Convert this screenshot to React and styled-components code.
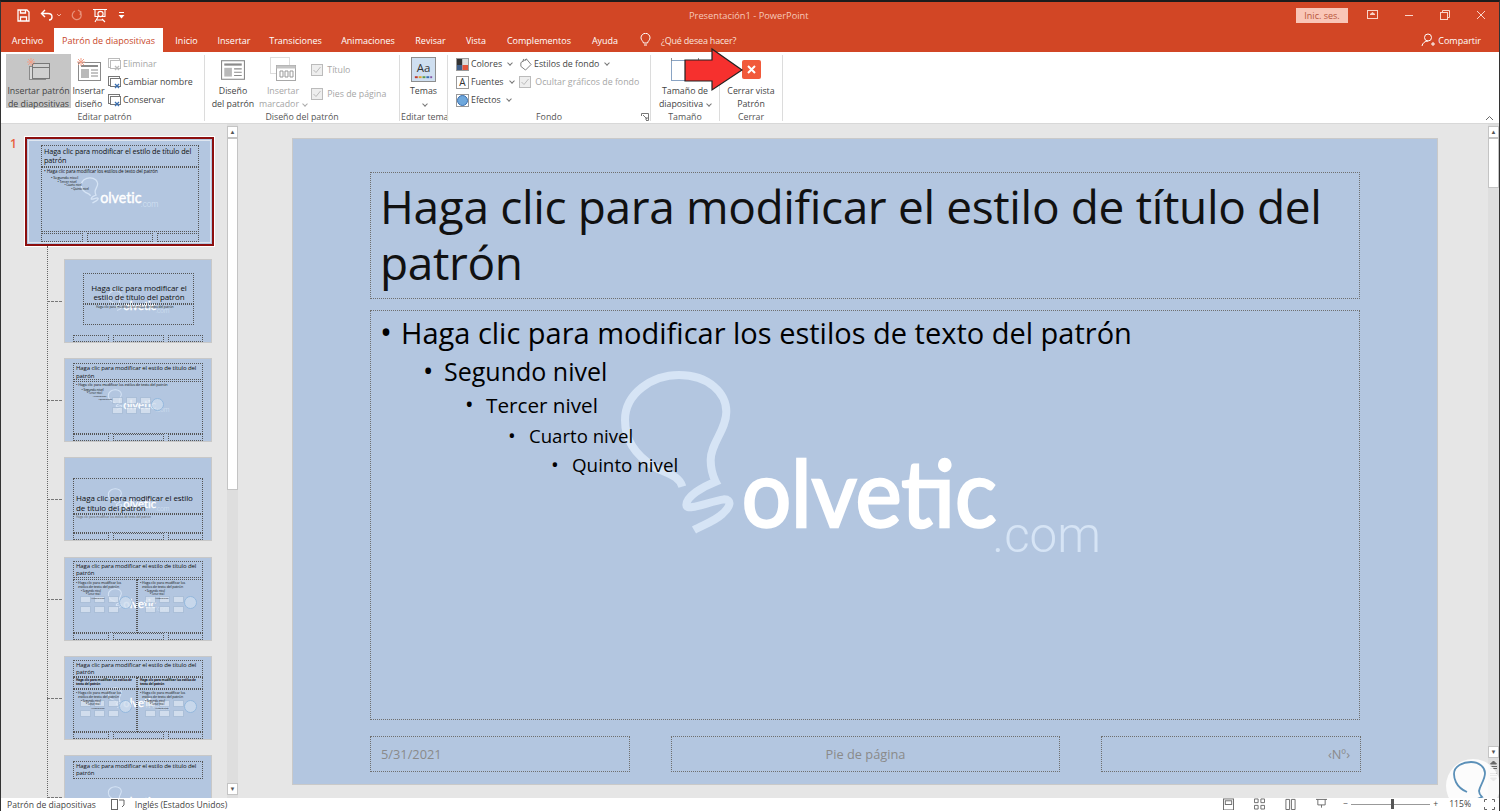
import React from 'react';
import styled, { createGlobalStyle } from 'styled-components';

const UI_FONT = '"Open Sans", "Noto Sans", sans-serif';

const Global = createGlobalStyle`
	html, body { margin: 0; padding: 0; height: 100%; overflow: hidden; background: #e6e6e6; }
	#root { height: 100%; }
	* { box-sizing: border-box; }
`;

const Win = styled.div`
	position: relative;
	width: 1500px;
	height: 811px;
	display: flex;
	flex-direction: column;
	overflow: hidden;
	border-top: 2px solid #1c1c1c;
	border-left: 1px solid #333;
	border-right: 1px solid #333;
	font-family: ${UI_FONT};
	background: #e6e6e6;
`;

/* title bar */
const TitleBar = styled.div`
	height: 26px;
	flex: none;
	background: #d24625;
	color: #fff;
	display: flex;
	align-items: center;
	position: relative;
`;
const Qat = styled.div`
	display: flex;
	align-items: center;
	gap: 10px;
	padding-left: 16px;
`;
const DocTitle = styled.div`
	position: absolute;
	left: 688px;
	top: 7px;
	font-size: 9.3px;
	color: #f6c9bb;
	white-space: nowrap;
`;
const WinControls = styled.div`
	margin-left: auto;
	display: flex;
	align-items: center;
	height: 100%;
`;
const SignIn = styled.div`
	width: 52px;
	height: 15px;
	background: #f9c6b7;
	color: #b8553b;
	font-size: 9px;
	line-height: 15px;
	text-align: center;
	margin-right: 7px;
`;
const WinBtn = styled.div`
	width: 36px;
	display: flex;
	justify-content: center;
`;

/* tabs */
const TabsRow = styled.div`
	height: 24px;
	flex: none;
	background: #d24625;
	display: flex;
	align-items: stretch;
	color: #fff;
	font-size: 9px;
`;
const Tab = styled.div`
	width: ${p => p.$w}px;
	flex: none;
	display: flex;
	align-items: center;
	justify-content: center;
	white-space: nowrap;
	background: ${p => (p.$active ? '#fff' : 'transparent')};
	color: ${p => (p.$active ? '#c8472a' : '#fff')};
`;
const TellMe = styled.div`
	display: flex;
	align-items: center;
	gap: 10px;
	margin-left: 14px;
	color: #fbe3db;
	letter-spacing: -0.2px;
`;
const Share = styled.div`
	margin-left: auto;
	display: flex;
	align-items: center;
	gap: 2px;
	padding-right: 18px;
`;

/* ribbon */
const Ribbon = styled.div`
	height: 72px;
	flex: none;
	background: #fff;
	display: flex;
	color: #444;
	font-size: 8.8px;
	border-bottom: 1px solid #d8d8d8;
	padding-left: 5px;
`;
const Group = styled.div`
	width: ${p => p.$w}px;
	flex: none;
	position: relative;
	display: flex;
	flex-direction: column;
	margin-right: 3px;
	&::after {
		content: '';
		position: absolute;
		right: -2px;
		top: 3px;
		bottom: 2px;
		width: 1px;
		background: #dcdcdc;
	}
`;
const GroupBody = styled.div`
	flex: 1;
	display: flex;
	align-items: flex-start;
	padding-top: 2px;
`;
const GroupLabel = styled.div`
	height: 12px;
	text-align: center;
	line-height: 12px;
	font-size: 8.8px;
	color: #555;
	position: relative;
	white-space: nowrap;
`;
const BigBtn = styled.div`
	width: ${p => p.$w}px;
	height: 54px;
	flex: none;
	display: flex;
	flex-direction: column;
	align-items: center;
	background: ${p => (p.$active ? '#c6c6c6' : 'transparent')};
	color: ${p => (p.$off ? '#a6a6a6' : '#444')};
`;
const BigIcon = styled.div`
	height: 31px;
	flex: none;
	display: flex;
	align-items: center;
	justify-content: center;
`;
const BigText = styled.div`
	line-height: 13px;
	text-align: center;
	white-space: nowrap;
`;
const SmallCol = styled.div`
	width: ${p => (p.$w ? `${p.$w}px` : 'auto')};
	flex: none;
	display: flex;
	flex-direction: column;
	gap: ${p => p.$gap ?? 0}px;
	padding-top: ${p => p.$top ?? 1}px;
	padding-left: ${p => p.$left ?? 0}px;
`;
const SmallBtn = styled.div`
	height: 18px;
	display: flex;
	align-items: center;
	gap: 2px;
	white-space: nowrap;
	color: ${p => (p.$off ? '#a6a6a6' : '#444')};
`;
const Chev = styled.span`
	display: inline-block;
	width: 4px;
	height: 4px;
	margin: 0 0 2px 4px;
	vertical-align: middle;
	border-right: 1px solid ${p => (p.$off ? '#aaa' : '#777')};
	border-bottom: 1px solid ${p => (p.$off ? '#aaa' : '#777')};
	transform: rotate(45deg);
`;
const Launcher = styled.svg`
	position: absolute;
	right: 0;
	top: 2px;
`;
const Collapse = styled.svg`
	margin: auto 5px 2px auto;
`;

/* main area */
const Main = styled.div`
	flex: 1;
	min-height: 0;
	display: flex;
	overflow: hidden;
`;
const Sidebar = styled.div`
	width: 226px;
	flex: none;
	position: relative;
	padding: 13px 0 0 24px;
	overflow: hidden;
`;
const SlideNum = styled.div`
	position: absolute;
	left: 9px;
	top: 11px;
	font-size: 12px;
	font-weight: 600;
	color: #e8603f;
`;
const Tree = styled.div`
	position: absolute;
	left: 46px;
	top: 122px;
	bottom: 0;
	width: 0;
	border-left: 1px dotted #666;
`;
const ThumbList = styled.div`
	display: flex;
	flex-direction: column;
	gap: 15.2px;
	margin-top: 13px;
	padding-left: 39px;
`;
const Row = styled.div`
	position: relative;
	&::before {
		content: '';
		position: absolute;
		left: -17px;
		width: 15px;
		top: 50%;
		border-top: 1px dashed #777;
	}
`;
const MainThumb = styled.div`
	width: 189px;
	height: 109px;
	border: 2px solid #8c0f0f;
	outline: 1px solid #fff;
	background: #b3c6e0;
	padding: 1px;
`;
const Mini = styled.div`
	position: relative;
	width: ${p => p.$w}px;
	height: ${p => p.$h}px;
	background: #b3c6e0;
	border: 1px solid ${p => p.$edge || '#c8c8c8'};
	overflow: hidden;
	color: #111;
	letter-spacing: -0.1px;
`;
const MiniBox = styled.div`
	position: absolute;
	left: ${p => p.$l}px;
	top: ${p => p.$t}px;
	width: ${p => p.$w}px;
	height: ${p => p.$h}px;
	border: 1px dotted #555;
	font-size: ${p => p.$fs}px;
	line-height: 1.22;
	padding: ${p => (p.$pad ? '0 1px 1px 2px' : '1px 2px')};
	text-align: ${p => (p.$c ? 'center' : 'left')};
	display: flex;
	flex-direction: column;
	justify-content: ${p => p.$j || 'flex-start'};
`;
const MiniLine = styled.div`
	font-size: ${p => p.$fs}px;
	padding-left: ${p => p.$i ?? 0}px;
	white-space: nowrap;
	line-height: 1.25;
`;
const MiniNote = styled.div`
	position: absolute;
	left: ${p => p.$l}px;
	top: ${p => p.$t}px;
	font-size: ${p => p.$fs}px;
	color: ${p => p.$color || '#222'};
	white-space: nowrap;
`;
const MiniGrey = styled.span`
	color: #666;
`;
const MiniLogo = styled.div`
	position: absolute;
	left: ${p => p.$l}px;
	top: ${p => p.$t}px;
`;
const Pics = styled.div`
	position: absolute;
	left: ${p => p.$l}px;
	top: ${p => p.$t}px;
	width: ${p => p.$w}px;
	display: flex;
	flex-wrap: wrap;
	gap: 3px;
	opacity: 0.7;
`;
const Pic = styled.div`
	width: 11px;
	height: 7px;
	background: #dfe8f3;
	border: 1px solid #a9bdd6;
`;
const Globe = styled.div`
	position: absolute;
	left: ${p => p.$l}px;
	top: ${p => p.$t}px;
	width: 13px;
	height: 13px;
	border-radius: 50%;
	background: #cddcee;
	border: 1px solid #8db5dc;
	opacity: 0.8;
`;

const ThumbScroll = styled.div`
	width: 11px;
	flex: none;
	background: #dedede;
	display: flex;
	flex-direction: column;
	margin-right: 2px;
	padding: 2px 0 3px;
`;
const ScrollBtn = styled.div`
	height: 12px;
	flex: none;
	background: #fff;
	border: 1px solid #c4c4c4;
	display: flex;
	align-items: center;
	justify-content: center;
	font-size: 6px;
	color: #555;
`;
const NavBtn = styled.div`
	height: 13px;
	flex: none;
	display: flex;
	align-items: center;
	justify-content: center;
`;
const ScrollThumb = styled.div`
	height: ${p => p.$h}px;
	flex: none;
	background: #fff;
	border: 1px solid #c4c4c4;
`;
const Spacer = styled.div`
	flex: 1;
`;
const Stage = styled.div`
	flex: 1;
	padding: 14px 0 0 52px;
	min-width: 0;
`;
const Slide = styled.div`
	position: relative;
	width: 1146px;
	height: 647px;
	background: #b3c6e0;
	border: 1px solid #c9c9c9;
	padding: 33px 77px 12px;
	display: flex;
	flex-direction: column;
	color: #000;
`;
const Dotted = styled.div`
	border: 1px dotted #6f6f6f;
	position: relative;
`;
const TitleBox = styled(Dotted)`
	height: 127px;
	flex: none;
	font-size: 46px;
	letter-spacing: -0.35px;
	line-height: 55.5px;
	padding: 6px 9px;
	color: #111;
`;
const BodyBox = styled(Dotted)`
	flex: 1;
	margin-top: 11px;
	padding: 2px 9px;
`;
const Level = styled.div`
	display: flex;
	align-items: baseline;
	font-size: ${p => p.$fs}px;
	height: ${p => p.$h}px;
	padding-left: ${p => p.$i}px;
	line-height: ${p => p.$h}px;
	white-space: nowrap;
	&::before {
		content: '•';
		width: 21px;
		flex: none;
		font-size: 1.1em;
	}
`;
const FootRow = styled.div`
	height: 36px;
	flex: none;
	margin-top: 16px;
	display: flex;
	justify-content: space-between;
	gap: 41px;
`;
const FootBox = styled(Dotted)`
	width: ${p => p.$w}px;
	flex: none;
	font-size: 12.8px;
	color: #8a8a8a;
	display: flex;
	align-items: center;
	padding: 0 10px;
	justify-content: ${p => p.$a};
`;
const LogoWrap = styled.div`
	position: absolute;
	left: 306px;
	top: 231px;
`;
const RightScroll = styled.div`
	width: 11px;
	position: absolute;
	right: 0;
	top: 122px;
	bottom: 13px;
	background: #dedede;
	display: flex;
	flex-direction: column;
	padding: 2px 0 14px;
`;
const Status = styled.div`
	height: 13px;
	flex: none;
	background: #fff;
	display: flex;
	align-items: flex-start;
	font-size: 8.6px;
	color: #444;
	padding-left: 6px;
	line-height: 15px;
	position: relative;
	z-index: 2;
`;
const StatusIcon = styled.svg`
	margin: ${p => p.$m};
	flex: none;
`;
const StatusRight = styled.div`
	margin-left: auto;
	display: flex;
	align-items: flex-start;
	gap: 20px;
	padding-right: 4px;
`;
const Zoom = styled.div`
	display: flex;
	align-items: center;
	gap: 3px;
	height: 13px;
	margin-left: -4px;
`;
const ZoomTrack = styled.div`
	position: relative;
	width: 79px;
	height: 1px;
	background: #999;
`;
const ZoomKnob = styled.div`
	position: absolute;
	left: 40px;
	top: -5px;
	width: 3px;
	height: 10px;
	background: #555;
`;
const ZoomValue = styled.span`
	margin: 0 10px 0 8px;
`;
const Arrow = styled.svg`
	position: absolute;
	left: 682px;
	top: 44px;
`;
const CloseBadge = styled.div`
	width: 19px;
	height: 19px;
	background: #f15a3b;
	border-radius: 2px;
	display: flex;
	align-items: center;
	justify-content: center;
`;
const Stamp = styled.svg`
	position: absolute;
	left: 1444px;
	top: 755px;
	z-index: 1;
`;

/* icons */
const Save = () => (
	<svg width="13" height="13" viewBox="0 0 13 13" fill="none" stroke="#fff" strokeWidth="1.3">
		<path d="M1 1h9l2 2v9H1z" /><path d="M3.5 1v3h5V1M3.5 12V8h6v4" />
	</svg>
);
const Undo = () => (
	<svg width="21" height="13" viewBox="0 0 21 13" fill="none" stroke="#fff" strokeWidth="1.4">
		<path d="M5 1L1.5 4.5 5 8M2 4.5h6c3 0 4 2 4 3.5s-1 3-3 3" />
		<path d="M17 5l2 2 2-2" stroke="#f3b3a0" strokeWidth="1" />
	</svg>
);
const Redo = () => (
	<svg width="12" height="13" viewBox="0 0 12 13" fill="none" stroke="#e8927b" strokeWidth="1.2">
		<path d="M9 3a4.5 4.5 0 1 1-5-1M7 1l3 2-1 3" />
	</svg>
);
const Present = () => (
	<svg width="15" height="15" viewBox="0 0 15 15" fill="none" stroke="#fff" strokeWidth="1.1">
		<path d="M0 1.5h14M2 1.5v7h10v-7" /><circle cx="7.5" cy="6" r="2.6" /><path d="M5 9l-3 5M9 11l3 3M4 12h6" />
	</svg>
);
const Custom = () => (
	<svg width="7" height="7" viewBox="0 0 7 7" fill="#fff">
		<rect x="1" y="0" width="5" height="1" /><path d="M0.5 3h6L3.5 6.5z" />
	</svg>
);
const Layout = ({ s = 22 }) => {
	const c = '#8a8a8a';
	return (
		<svg width={s} height={s} viewBox="0 0 22 22" fill="none">
			<rect x="0.5" y="2.5" width="21" height="17" fill="#fff" stroke={c} />
			<rect x="3" y="5" width="16" height="2" fill={c} />
			<rect x="3" y="9" width="7" height="8" fill={c} opacity=".6" />
			<path d="M12 10h7M12 13h7M12 16h7" stroke={c} />
		</svg>
	);
};
const Spark = () => (
	<g stroke="#f0a08a" strokeWidth="1" fill="none">
		<path d="M5 1v8M1 5h8M2 2l6 6M8 2L2 8" />
	</g>
);
const MasterIcon = () => (
	<svg width="26" height="24" viewBox="0 0 26 24" fill="none">
		<rect x="3.5" y="8.5" width="16" height="13" fill="#d8d8d8" stroke="#8a8a8a" />
		<rect x="6.5" y="5.5" width="17" height="15" fill="#d0d0d0" stroke="#777" />
		<rect x="6.5" y="9" width="17" height="1" fill="#777" />
		<g transform="translate(0,-1)"><Spark /></g>
	</svg>
);
const DesignIcon = () => (
	<svg width="26" height="24" viewBox="0 0 26 24" fill="none">
		<rect x="2.5" y="4.5" width="22" height="18" fill="#fff" stroke="#8a8a8a" />
		<rect x="5" y="7" width="17" height="2" fill="#8a8a8a" />
		<rect x="5" y="11" width="8" height="9" fill="#b9b9b9" />
		<path d="M15 12h7M15 15h7M15 18h7" stroke="#8a8a8a" />
		<g transform="translate(0,-1)"><Spark /></g>
	</svg>
);
const Small = ({ off, accent }) => {
	const c = off ? '#bbb' : '#777';
	return (
		<svg width="13" height="13" viewBox="0 0 13 13" fill="none">
			<rect x="0.5" y="0.5" width="11" height="9" fill="#fff" stroke={c} />
			<rect x="2.5" y="2.5" width="10" height="8" fill="#fff" stroke={c} />
			<path d="M7 8l4 4M11 8l-4 4" stroke={accent || c} strokeWidth="1.3" />
		</svg>
	);
};
const Placeholder = () => (
	<svg width="26" height="26" viewBox="0 0 26 26" fill="none">
		<rect x="0.5" y="0.5" width="19" height="16" stroke="#bbb" strokeDasharray="1 1" />
		<rect x="6.5" y="8.5" width="19" height="15" fill="#fff" stroke="#a8a8a8" />
		<rect x="6.5" y="8.5" width="19" height="3" fill="#c4c4c4" />
		<path d="M10 14h3v6h-3zM15 14h3v6h-3zM20 14h3v6h-3z" stroke="#999" />
	</svg>
);
const Check = () => (
	<svg width="12" height="12" viewBox="0 0 12 12" fill="#eee" stroke="#bbb">
		<rect x="0.5" y="0.5" width="11" height="11" />
		<path d="M2.5 6l2.5 2.5L9.5 3" fill="none" />
	</svg>
);
const Themes = () => (
	<svg width="25" height="25" viewBox="0 0 26 26">
		<rect x="0.5" y="0.5" width="25" height="25" fill="#cfdff0" stroke="#8a8a8a" />
		<text x="13" y="16" textAnchor="middle" fontSize="12" fontFamily="Open Sans" fill="#333">Aa</text>
		<path d="M4 21h3" stroke="#c0392b" strokeWidth="2" /><path d="M8 21h3" stroke="#e1a32a" strokeWidth="2" />
		<path d="M12 21h3" stroke="#5b9b4b" strokeWidth="2" /><path d="M16 21h3" stroke="#3a6fb0" strokeWidth="2" />
		<path d="M20 21h2" stroke="#8556a5" strokeWidth="2" />
	</svg>
);
const Colors = () => (
	<svg width="13" height="13" viewBox="0 0 13 13">
		<rect x="0.5" y="0.5" width="12" height="12" fill="#fff" stroke="#999" />
		<rect x="1" y="1" width="5.5" height="6" fill="#333" /><rect x="6.5" y="1" width="5.5" height="6" fill="#ddd" />
		<rect x="1" y="7" width="5.5" height="5" fill="#3f5f8a" /><rect x="6.5" y="7" width="5.5" height="5" fill="#e2543a" />
	</svg>
);
const Fonts = () => (
	<svg width="13" height="13" viewBox="0 0 13 13">
		<rect x="0.5" y="0.5" width="12" height="12" fill="#fff" stroke="#999" />
		<text x="6.5" y="10" textAnchor="middle" fontSize="10" fontFamily="Open Sans" fill="#333">A</text>
	</svg>
);
const Effects = () => (
	<svg width="13" height="13" viewBox="0 0 13 13">
		<rect x="0.5" y="0.5" width="12" height="12" fill="#fff" stroke="#999" />
		<circle cx="6.5" cy="6.5" r="5" fill="#6fa8dc" stroke="#3a6fb0" />
	</svg>
);
const Paint = () => (
	<svg width="13" height="13" viewBox="0 0 14 14" fill="#fff" stroke="#777">
		<path d="M2 5l6-4 5 6-6 6-5-4z" /><path d="M4 4l1-3M7 3l1-2" fill="none" />
	</svg>
);
const SizeIcon = () => (
	<svg width="30" height="26" viewBox="0 0 30 26" fill="none">
		<rect x="1.5" y="3.5" width="27" height="20" fill="#fff" stroke="#8aa4c4" />
		<path d="M1.5 1v3M28.5 1v3" stroke="#8a8a8a" />
	</svg>
);
const DoubleArrow = ({ down }) => (
	<svg width="9" height="9" viewBox="0 0 9 9" fill="#666" stroke="#666" style={down ? { transform: 'scaleY(-1)' } : undefined}>
		<path d="M4.5 1L7.5 4H1.5z" /><path d="M1 6.5h7M1 8.5h7" fill="none" />
	</svg>
);

/* logo: bulb drawn in svg, name as real text */
const Logo = ({ w = 530, ink = '#d6e4f5', main = '#fff' }) => (
	<svg width={w} height={(w * 210) / 530} viewBox="0 0 1590 630" fill="none">
		<path
			d="M250 350C240 315 200 310 165 290 100 250 78 200 78 150 78 70 160 15 240 15 330 15 382 70 382 125 382 180 335 220 335 270 335 295 340 315 350 335 310 350 262 380 262 405 262 425 330 395 375 388 400 388 395 410 370 432 345 455 310 465 285 480"
			stroke={ink}
			strokeWidth="24"
		/>
		<text x="428" y="472" fontFamily="Lato, sans-serif" fontSize="282" fill={main} stroke={main} strokeWidth="8" textLength="765" lengthAdjust="spacingAndGlyphs">olvetic</text>
		<text x="1180" y="546" fontFamily="Roboto, sans-serif" fontWeight="300" fontSize="152" fill={ink} textLength="326" lengthAdjust="spacingAndGlyphs">.com</text>
	</svg>
);

const T1 = 'Haga clic para modificar el estilo de título del patrón';
const T2 = 'Haga clic para modificar los estilos de texto del patrón';

const Levels = ({ s }) => (
	<>
		<MiniLine $fs={29 * s}>• {T2}</MiniLine>
		<MiniLine $fs={25 * s} $i={43 * s}>• Segundo nivel</MiniLine>
		<MiniLine $fs={21 * s} $i={85 * s}>• Tercer nivel</MiniLine>
		<MiniLine $fs={18.7 * s} $i={128 * s}>• Cuarto nivel</MiniLine>
		<MiniLine $fs={18.7 * s} $i={171 * s}>• Quinto nivel</MiniLine>
	</>
);
const MiniFooter = ({ t = 75 }) => (
	<>
		<MiniBox $l={8} $t={t} $w={36} $h={7} />
		<MiniBox $l={48} $t={t} $w={51} $h={7} />
		<MiniBox $l={103} $t={t} $w={35} $h={7} />
	</>
);
const PicSet = ({ l, t, w = 45, n = 6 }) => (
	<Pics $l={l} $t={t} $w={w}>
		{Array.from({ length: n }).map((_, i) => <Pic key={i} />)}
	</Pics>
);
const ThumbLogo = () => <MiniLogo $l={40} $t={30}><Logo w={68} /></MiniLogo>;

const ColumnText = () => (
	<>
		<MiniLine $fs={3.6}>• Haga clic para modificar los</MiniLine>
		<MiniLine $fs={3.6} $i={2}>estilos de texto del patrón</MiniLine>
		<MiniLine $fs={3} $i={5}>• Segundo nivel</MiniLine>
		<MiniLine $fs={2.6} $i={10}>• Tercer nivel</MiniLine>
		<MiniLine $fs={2.4} $i={15}>• Cuarto nivel</MiniLine>
	</>
);

const ThumbA = () => (
	<Mini $w={148} $h={84}>
		<ThumbLogo />
		<MiniBox $l={18} $t={13} $w={111} $h={31} $fs={8} $c $j="flex-end" $pad>{T1}</MiniBox>
		<MiniBox $l={18} $t={44} $w={111} $h={21} $fs={3} />
		<MiniNote $l={31} $t={44} $fs={3.3}>{T2}</MiniNote>
		<MiniFooter />
	</Mini>
);
const ThumbB = () => (
	<Mini $w={148} $h={84}>
		<ThumbLogo />
		<PicSet l={47} t={38} />
		<Globe $l={86} $t={39} />
		<MiniBox $l={8} $t={4} $w={130} $h={17} $fs={6}>{T1}</MiniBox>
		<MiniBox $l={8} $t={22} $w={130} $h={53} $fs={4}><Levels s={0.13} /></MiniBox>
		<MiniFooter />
	</Mini>
);
const ThumbC = () => (
	<Mini $w={148} $h={84}>
		<ThumbLogo />
		<MiniBox $l={8} $t={20} $w={130} $h={36} $fs={8} $j="flex-end" $pad>{T1}</MiniBox>
		<MiniBox $l={8} $t={56} $w={130} $h={19} $fs={3.2}><MiniGrey>{T2}</MiniGrey></MiniBox>
		<MiniFooter />
	</Mini>
);
const ThumbD = () => (
	<Mini $w={148} $h={84}>
		<ThumbLogo />
		<PicSet l={15} t={38} />
		<PicSet l={80} t={38} />
		<Globe $l={54} $t={38} />
		<Globe $l={119} $t={38} />
		<MiniBox $l={8} $t={3} $w={130} $h={17} $fs={6}>{T1}</MiniBox>
		<MiniBox $l={8} $t={21} $w={64} $h={54} $fs={3.2}><ColumnText /></MiniBox>
		<MiniBox $l={72} $t={21} $w={66} $h={54} $fs={3.2}><ColumnText /></MiniBox>
		<MiniFooter />
	</Mini>
);
const ThumbE = () => (
	<Mini $w={148} $h={84}>
		<ThumbLogo />
		<PicSet l={15} t={43} />
		<PicSet l={80} t={43} />
		<Globe $l={54} $t={43} />
		<Globe $l={119} $t={43} />
		<MiniBox $l={8} $t={3} $w={130} $h={17} $fs={6}>{T1}</MiniBox>
		<MiniBox $l={8} $t={20} $w={64} $h={12} $fs={3.2}><b>{T2}</b></MiniBox>
		<MiniBox $l={72} $t={20} $w={66} $h={12} $fs={3.2}><b>{T2}</b></MiniBox>
		<MiniBox $l={8} $t={32} $w={64} $h={43} $fs={3.2}><ColumnText /></MiniBox>
		<MiniBox $l={72} $t={32} $w={66} $h={43} $fs={3.2}><ColumnText /></MiniBox>
		<MiniFooter />
	</Mini>
);
const ThumbF = () => (
	<Mini $w={148} $h={84}>
		<ThumbLogo />
		<MiniBox $l={8} $t={5} $w={130} $h={18} $fs={6}>{T1}</MiniBox>
	</Mini>
);

export default function App() {
	return (
		<>
			<Global />
			<Win>
				<TitleBar>
					<Qat>
						<Save />
						<Undo />
						<Redo />
						<Present />
						<Custom />
					</Qat>
					<DocTitle>Presentación1 - PowerPoint</DocTitle>
					<WinControls>
						<SignIn>Inic. ses.</SignIn>
						<WinBtn>
							<svg width="12" height="10" viewBox="0 0 12 10" fill="none" stroke="#f9d5ca"><rect x="0.5" y="0.5" width="10" height="8" /><path d="M3 4.5l2.5-2 2.5 2z" fill="#f9d5ca" /></svg>
						</WinBtn>
						<WinBtn>
							<svg width="10" height="10" viewBox="0 0 10 10" stroke="#f9d5ca"><path d="M1 5.5h8" /></svg>
						</WinBtn>
						<WinBtn>
							<svg width="10" height="10" viewBox="0 0 10 10" fill="none" stroke="#f9d5ca"><rect x="0.5" y="2.5" width="7" height="7" /><path d="M2.5 2.5v-2h7v7h-2" /></svg>
						</WinBtn>
						<WinBtn>
							<svg width="10" height="10" viewBox="0 0 10 10" stroke="#f9d5ca"><path d="M1 1l8 8M9 1l-8 8" /></svg>
						</WinBtn>
					</WinControls>
				</TitleBar>
				<TabsRow>
					<Tab $w={53}>Archivo</Tab>
					<Tab $active $w={109}>Patrón de diapositivas</Tab>
					<Tab $w={47}>Inicio</Tab>
					<Tab $w={48}>Insertar</Tab>
					<Tab $w={75}>Transiciones</Tab>
					<Tab $w={70}>Animaciones</Tab>
					<Tab $w={55}>Revisar</Tab>
					<Tab $w={36}>Vista</Tab>
					<Tab $w={90}>Complementos</Tab>
					<Tab $w={42}>Ayuda</Tab>
					<TellMe>
						<svg width="11" height="14" viewBox="0 0 11 14" fill="none" stroke="#fff"><path d="M3.5 10C3 8 1 7 1 4.8a4.5 4.5 0 0 1 9 0C10 7 8 8 7.5 10zM4 12h3" /></svg>
						¿Qué desea hacer?
					</TellMe>
					<Share>
						<svg width="15" height="14" viewBox="0 0 15 14" fill="none" stroke="#fff"><circle cx="7" cy="4.5" r="3.5" /><path d="M1 13c.5-3 3-5 6-5M10 11h4M12 9v4" /></svg>
						Compartir
					</Share>
				</TabsRow>
				<Ribbon>
					<Group $w={197}>
						<GroupBody>
							<BigBtn $w={65} $active>
								<BigIcon><MasterIcon /></BigIcon>
								<BigText>Insertar patrón<br />de diapositivas</BigText>
							</BigBtn>
							<BigBtn $w={35}>
								<BigIcon><DesignIcon /></BigIcon>
								<BigText>Insertar<br />diseño</BigText>
							</BigBtn>
							<SmallCol $left={2}>
								<SmallBtn $off><Small off /> Eliminar</SmallBtn>
								<SmallBtn><Small accent="#3a6fb0" /> Cambiar nombre</SmallBtn>
								<SmallBtn><Small accent="#3a6fb0" /> Conservar</SmallBtn>
							</SmallCol>
						</GroupBody>
						<GroupLabel>Editar patrón</GroupLabel>
					</Group>
					<Group $w={192}>
						<GroupBody>
							<BigBtn $w={54}>
								<BigIcon><Layout s={24} /></BigIcon>
								<BigText>Diseño<br />del patrón</BigText>
							</BigBtn>
							<BigBtn $w={46} $off>
								<BigIcon><Placeholder /></BigIcon>
								<BigText>Insertar<br />marcador<Chev $off /></BigText>
							</BigBtn>
							<SmallCol $gap={6} $top={7} $left={5}>
								<SmallBtn $off><Check />&nbsp;Título</SmallBtn>
								<SmallBtn $off><Check />&nbsp;Pies de página</SmallBtn>
							</SmallCol>
						</GroupBody>
						<GroupLabel>Diseño del patrón</GroupLabel>
					</Group>
					<Group $w={45}>
						<GroupBody>
							<BigBtn $w={45}>
								<BigIcon><Themes /></BigIcon>
								<BigText>Temas<br /><Chev /></BigText>
							</BigBtn>
						</GroupBody>
						<GroupLabel>Editar tema</GroupLabel>
					</Group>
					<Group $w={200}>
						<GroupBody>
							<SmallCol $w={70} $left={7}>
								<SmallBtn><Colors /> Colores<Chev /></SmallBtn>
								<SmallBtn><Fonts /> Fuentes<Chev /></SmallBtn>
								<SmallBtn><Effects /> Efectos<Chev /></SmallBtn>
							</SmallCol>
							<SmallCol>
								<SmallBtn><Paint /> Estilos de fondo<Chev /></SmallBtn>
								<SmallBtn $off><Check />&nbsp;Ocultar gráficos de fondo</SmallBtn>
							</SmallCol>
						</GroupBody>
						<GroupLabel>
							Fondo
							<Launcher width="8" height="8" viewBox="0 0 8 8" fill="none" stroke="#777"><path d="M0.5 3V.5H7.5V7.5H5M2 2l4 4M4 6h2V4" /></Launcher>
						</GroupLabel>
					</Group>
					<Group $w={66}>
						<GroupBody>
							<BigBtn $w={66}>
								<BigIcon><SizeIcon /></BigIcon>
								<BigText>Tamaño de<br />diapositiva<Chev /></BigText>
							</BigBtn>
						</GroupBody>
						<GroupLabel>Tamaño</GroupLabel>
					</Group>
					<Group $w={60}>
						<GroupBody>
							<BigBtn $w={60}>
								<BigIcon>
									<CloseBadge>
										<svg width="9" height="9" viewBox="0 0 9 9" stroke="#fff" strokeWidth="2"><path d="M1 1l7 7M8 1L1 8" /></svg>
									</CloseBadge>
								</BigIcon>
								<BigText>Cerrar vista<br />Patrón</BigText>
							</BigBtn>
						</GroupBody>
						<GroupLabel>Cerrar</GroupLabel>
					</Group>
					<Collapse width="9" height="6" viewBox="0 0 9 6" fill="none" stroke="#666"><path d="M1 5l3.5-3.5L8 5" /></Collapse>
				</Ribbon>
				<Main>
					<Sidebar>
						<SlideNum>1</SlideNum>
						<Tree />
						<MainThumb>
							<Mini $w={183} $h={103} $edge="#dfe6f0">
								<MiniLogo $l={48} $t={36}><Logo w={86} /></MiniLogo>
								<MiniBox $l={12} $t={4} $w={158} $h={22} $fs={7.3}>{T1}</MiniBox>
								<MiniBox $l={12} $t={26} $w={158} $h={65} $fs={4}><Levels s={0.16} /></MiniBox>
								<MiniBox $l={12} $t={92} $w={42} $h={9} />
								<MiniBox $l={58} $t={92} $w={66} $h={9} />
								<MiniBox $l={128} $t={92} $w={42} $h={9} />
							</Mini>
						</MainThumb>
						<ThumbList>
							<Row><ThumbA /></Row>
							<Row><ThumbB /></Row>
							<Row><ThumbC /></Row>
							<Row><ThumbD /></Row>
							<Row><ThumbE /></Row>
							<Row><ThumbF /></Row>
						</ThumbList>
					</Sidebar>
					<ThumbScroll>
						<ScrollBtn>▲</ScrollBtn>
						<ScrollThumb $h={352} />
						<Spacer />
						<ScrollBtn>▼</ScrollBtn>
					</ThumbScroll>
					<Stage>
						<Slide>
							<LogoWrap><Logo /></LogoWrap>
							<TitleBox>{T1}</TitleBox>
							<BodyBox>
								<Level $fs={29} $h={38} $i={0}>{T2}</Level>
								<Level $fs={25} $h={40} $i={43}>Segundo nivel</Level>
								<Level $fs={20.7} $h={28} $i={85}>Tercer nivel</Level>
								<Level $fs={18.6} $h={33} $i={128}>Cuarto nivel</Level>
								<Level $fs={18.8} $h={24} $i={171}>Quinto nivel</Level>
							</BodyBox>
							<FootRow>
								<FootBox $w={260} $a="flex-start">5/31/2021</FootBox>
								<FootBox $w={389} $a="center">Pie de página</FootBox>
								<FootBox $w={260} $a="flex-end">‹Nº›</FootBox>
							</FootRow>
						</Slide>
					</Stage>
					<RightScroll>
						<ScrollBtn>▲</ScrollBtn>
						<ScrollThumb $h={50} />
						<Spacer />
						<ScrollBtn>▼</ScrollBtn>
						<NavBtn><DoubleArrow /></NavBtn>
						<NavBtn><DoubleArrow down /></NavBtn>
					</RightScroll>
				</Main>
				<Status>
					Patrón de diapositivas
					<StatusIcon $m="0 10px 0 15px" width="14" height="12" viewBox="0 0 14 12" fill="none" stroke="#666"><rect x="0.5" y="1.5" width="6" height="10" /><path d="M8 2h5v5l-2 2" /></StatusIcon>
					Inglés (Estados Unidos)
					<StatusRight>
						<svg width="11" height="12" viewBox="0 0 12 12" fill="none" stroke="#666"><rect x="0.5" y="0.5" width="11" height="12" /><rect x="2.5" y="2.5" width="7" height="4" /></svg>
						<svg width="11" height="12" viewBox="0 0 12 12" fill="none" stroke="#666"><path d="M.5.5h4v4h-4zM7.5.5h4v4h-4zM.5 7.5h4v4h-4zM7.5 7.5h4v4h-4z" /></svg>
						<svg width="11" height="12" viewBox="0 0 12 12" fill="none" stroke="#666"><path d="M1 1h4v11H1zM7 1h4v11H7z" /></svg>
						<svg width="11" height="12" viewBox="0 0 12 12" fill="none" stroke="#666"><path d="M0 1h12M2 1v6h8V1M6 7v3" /></svg>
						<Zoom>
							<span>−</span>
							<ZoomTrack><ZoomKnob /></ZoomTrack>
							<span>+</span>
							<ZoomValue>115%</ZoomValue>
							<svg width="11" height="11" viewBox="0 0 11 11" fill="none" stroke="#666"><path d="M.5 3V.5H3M8 .5h2.5V3M10.5 8v2.5H8M3 10.5H.5V8" /></svg>
						</Zoom>
					</StatusRight>
				</Status>
				<Arrow width="62" height="54" viewBox="0 0 62 54">
					<path d="M2 14H29V3L59 24 29 44V35H2z" fill="#f6302e" stroke="#222" strokeWidth="1.2" />
				</Arrow>
				<Stamp width="56" height="56" viewBox="0 0 56 56" fill="none">
					<circle cx="28" cy="29" r="27" fill="#fff" fillOpacity=".85" />
					<path d="M22 35C10 30 9 20 9 17 9 9 18 5 26 5 35 5 40 11 40 16 40 23 35 28 34 34 34 37 36 39 37 40 31 42 27 44 30 47 34 46 40 43 42 43 42 47 36 50 28 52" stroke="#5b90b8" strokeWidth="1.8" />
				</Stamp>
			</Win>
		</>
	);
}
